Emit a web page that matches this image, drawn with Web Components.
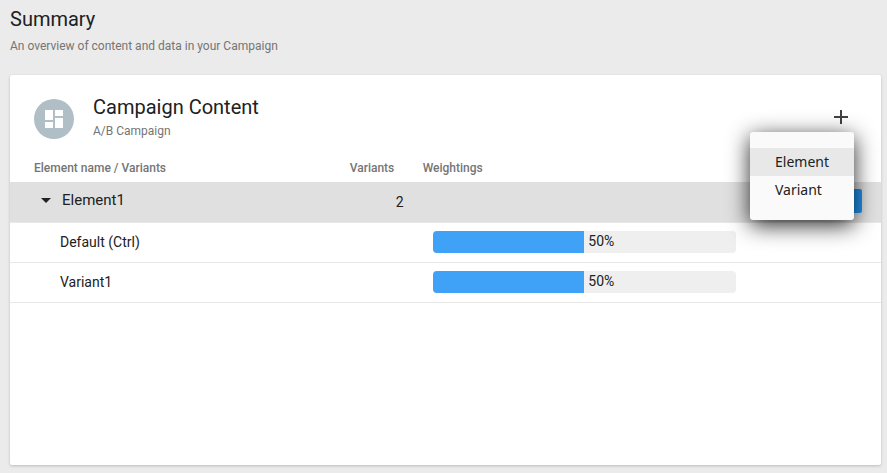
<!DOCTYPE html>
<html lang="en">
<head>
<meta charset="utf-8">
<meta name="viewport" content="width=device-width, initial-scale=1">
<title>Summary</title>
<style>
html, body { height: 100%; }
body { margin: 0; background: #ebebeb; color: #212121; font-family: Roboto, "Liberation Sans", sans-serif; }
</style>
</head>
<body>
<summary-page></summary-page>

<template id="summary-page">
  <style>
    :host { display: flex; flex-direction: column; box-sizing: border-box; min-height: 100%; padding: 7px 6px 8px 10px; }
    h1 { margin: 0; font-size: 20px; line-height: 24px; font-weight: 400; }
    p { margin: 5px 0 19px; font-size: 12px; line-height: 20px; color: #757575; }
    content-card { flex: 1; }
  </style>
  <h1>Summary</h1>
  <p>An overview of content and data in your Campaign</p>
  <content-card>
    <span slot="title">Campaign Content</span>
    <span slot="subtitle">A/B Campaign</span>
    <add-menu slot="action"></add-menu>
    <variant-table></variant-table>
  </content-card>
</template>

<template id="content-card">
  <style>
    :host { display: block; background: #fff; border-radius: 2px; box-shadow: 0 1px 3px rgba(0,0,0,.2); }
    header { display: flex; align-items: flex-start; gap: 19px; padding: 20px 24px 8px; min-height: 50px; }
    .avatar { flex: none; width: 40px; height: 40px; margin-top: 4px; border-radius: 50%; background: #b0bec5; display: grid; place-items: center; }
    svg { width: 24px; height: 24px; fill: #fff; }
    .text { flex: 1; }
    h2 { margin: 0 0 2px; font-size: 20px; line-height: 24px; font-weight: 400; }
    .sub { font-size: 12px; line-height: 20px; color: #757575; }
  </style>
  <header>
    <div class="avatar"><svg viewBox="0 0 24 24" aria-hidden="true"><path d="M3 13h8V3H3v10zm0 8h8v-6H3v6zm10 0h8V11h-8v10zm0-18v6h8V3h-8z"/></svg></div>
    <div class="text"><h2><slot name="title"></slot></h2><div class="sub"><slot name="subtitle"></slot></div></div>
    <slot name="action"></slot>
  </header>
  <slot></slot>
</template>

<template id="add-menu">
  <style>
    :host { display: block; position: relative; margin: 10px 4px 0 0; }
    button { font: inherit; color: inherit; border: 0; padding: 0; background: none; display: block; cursor: pointer; }
    svg { display: block; width: 24px; height: 24px; fill: #424242; }
    .menu { position: absolute; z-index: 2; top: 27px; right: -1px; width: 104px; padding: 16px 0; background: #fafafa; border-radius: 3px; box-shadow: 0 5px 22px rgba(0,0,0,.85); }
    .menu button { width: 100%; padding-left: 25px; text-align: left; font-family: "Noto Sans", Roboto, sans-serif; font-size: 14px; line-height: 28px; }
    .menu .active { background: #e8e8e8; }
  </style>
  <button aria-label="Add" aria-haspopup="menu" aria-expanded="true"><svg viewBox="0 0 24 24" aria-hidden="true"><path d="M19 13h-6v6h-2v-6H5v-2h6V5h2v6h6v2z"/></svg></button>
  <div class="menu" role="menu"><button role="menuitem" class="active">Element</button><button role="menuitem">Variant</button></div>
</template>

<template id="variant-table">
  <style>
    :host { display: block; }
    table { width: 100%; table-layout: fixed; border-collapse: separate; border-spacing: 0; }
    th, td { padding: 0; text-align: left; font-weight: 400; font-size: 14px; }
    .name { width: 39%; }
    .count { width: 73px; }
    .actions { width: 145px; }
    thead th { height: 29px; font-size: 12px; font-weight: 500; color: #757575; }
    thead th:first-child { padding-left: 24px; }
    tbody th, tbody td { height: 37px; padding-bottom: 2px; border-bottom: 1px solid #e8e8e8; }
    tbody th { padding-left: 50px; }
    .group th, .group td { height: 40px; padding-bottom: 0; background: #e0e0e0; }
    .group th { padding-left: 24px; font-size: 15px; }
    .toggle { display: flex; align-items: center; gap: 4px; margin-top: -4px; padding: 0; border: 0; background: none; font: inherit; color: inherit; }
    .toggle svg { width: 24px; height: 24px; fill: #212121; }
    .number { padding-left: 46px; }
    .bar { padding-left: 10px; }
    .edit { display: block; width: 56px; height: 24px; margin: -2px 19px 0 auto; border: 0; border-radius: 2px; background: #2196f3; }
  </style>
  <table>
    <colgroup><col class="name"><col class="count"><col><col class="actions"></colgroup>
    <thead><tr><th scope="col">Element name / Variants</th><th scope="col">Variants</th><th scope="col">Weightings</th><td></td></tr></thead>
    <tbody>
      <tr class="group"><th scope="rowgroup"><button class="toggle" aria-expanded="true"><svg viewBox="0 0 24 24" aria-hidden="true"><path d="M7 10l5 5 5-5z"/></svg>Element1</button></th><td class="number">2</td><td></td><td><button class="edit" aria-label="Edit Element1"></button></td></tr>
      <tr><th scope="row">Default (Ctrl)</th><td></td><td class="bar"><weight-bar value="50"></weight-bar></td><td></td></tr>
      <tr><th scope="row">Variant1</th><td></td><td class="bar"><weight-bar value="50"></weight-bar></td><td></td></tr>
    </tbody>
  </table>
</template>

<template id="weight-bar">
  <style>
    :host { display: flex; height: 22px; overflow: hidden; background: #efefef; border-radius: 4px; font-size: 14px; line-height: 20px; }
    .fill { flex: none; background: #3fa2f7; }
    .label { padding-left: 4px; }
  </style>
  <div class="fill"></div><span class="label"></span>
</template>

<script>
class TemplateElement extends HTMLElement {
  constructor() {
    super();
    this.attachShadow({ mode: "open" }).append(document.getElementById(this.localName).content.cloneNode(true));
  }
}
class WeightBar extends TemplateElement {
  connectedCallback() {
    const value = this.getAttribute("value");
    this.shadowRoot.querySelector(".fill").style.width = value + "%";
    this.shadowRoot.querySelector(".label").textContent = value + "%";
  }
}
customElements.define("weight-bar", WeightBar);
customElements.define("variant-table", class extends TemplateElement {});
customElements.define("add-menu", class extends TemplateElement {});
customElements.define("content-card", class extends TemplateElement {});
customElements.define("summary-page", class extends TemplateElement {});
</script>
</body>
</html>
